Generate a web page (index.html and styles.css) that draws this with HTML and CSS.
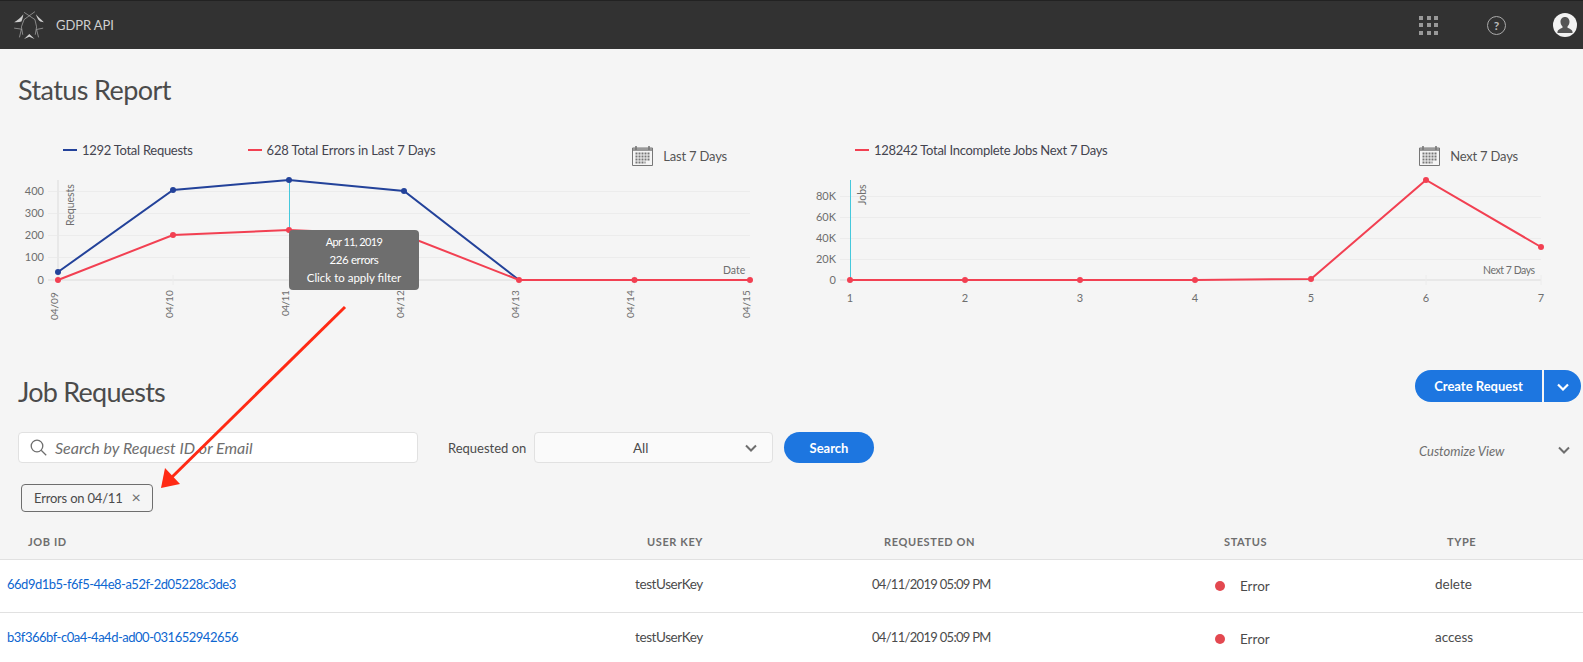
FILE: index.html
```html
<!DOCTYPE html>
<html lang="en">
<head>
  <meta charset="UTF-8">
  <meta name="viewport" content="width=device-width, initial-scale=1.0">
  <title>GDPR API</title>
  <link rel="stylesheet" href="styles.css">
</head>
<body>
  <svg class="defs" width="0" height="0" aria-hidden="true">
    <symbol id="calendar" viewBox="0 0 21 21">
      <path d="M.5 3h20v17.5H.5z" fill="none" stroke="#777"/>
      <path d="M1 3h19v3H1z" fill="#999"/>
      <path d="M4 1v4M17 1v4" stroke="#777" stroke-width="1.6"/>
      <path d="M3.5 8.5h14M3.5 11.500h14M3.500 14.500h14M3.500 17.500h10" stroke="#777" stroke-width="2" stroke-dasharray="2 1"/>
    </symbol>
  </svg>

  <header class="topbar">
    <svg class="logo" width="30" height="29" viewBox="42 40 90 88" fill="none" stroke="#b5b5b5" stroke-width="2">
      <path d="M72 44L105 66M105 42L72 66M72 66L64 88L68 112M105 66L110 88L106 112M42 92L64 95L58 120M130 92L110 96L116 120"/>
      <path d="M42 74C52 68 60 62 70 50C68 62 66 68 64 72C58 74 50 75 42 74zM132 74C122 74 114 70 108 50C112 56 122 64 132 74zM72 125L88 110L104 125L88 118z" fill="#cfcfcf" stroke="none"/>
    </svg>
    <span class="app-name">GDPR API</span>
    <div class="topbar-actions">
      <div class="apps-grid">
        <i></i><i></i><i></i><i></i><i></i><i></i><i></i><i></i><i></i>
      </div>
      <span class="help-icon">?</span>
      <svg class="avatar" width="24" height="24" viewBox="0 0 24 24">
        <circle cx="12" cy="12" r="12" fill="#f2f2f2"/>
        <path d="M12 4c-3 0-4.500 2.300-4.500 4.800 0 2 .9 3.600 2 4.700v1.300c-2.500 1-4.800 1.900-5.200 4.400 0 .5.300.8.700.8h14c.4 0 .7-.3.700-.8-.4-2.500-2.700-3.400-5.200-4.400v-1.300c1.100-1.100 2-2.700 2-4.700C16.500 6.300 15 4 12 4z" fill="#555"/>
      </svg>
    </div>
  </header>

  <main class="page">
    <h1 class="page-title">Status Report</h1>

    <section class="charts">
      <div class="chart-panel">
        <div class="chart-top">
          <div class="legend legend-left">
            <span class="legend-item"><i class="swatch swatch-blue"></i>1292 Total Requests</span>
            <span class="legend-item legend-errors"><i class="swatch swatch-red"></i>628 Total Errors in Last 7 Days</span>
          </div>
          <div class="range range-left">
            <svg width="21" height="21"><use href="#calendar"/></svg>
            <span>Last 7 Days</span>
          </div>
        </div>
        <svg class="chart" width="790" height="170" viewBox="0 170 790 170">
          <g class="grid">
            <path d="M48 191.500H750M48 213.500H750M48 235.500H750M48 257.500H750"/>
            <path class="axis" d="M48 280H750M58 180V280"/>
            <path d="M173 275V285M289 275V285M404 275V285M519 275V285M634.500 275V285M750 275V285"/>
          </g>
          <g class="y-labels">
            <text x="44" y="195">400</text>
            <text x="44" y="217">300</text>
            <text x="44" y="239">200</text>
            <text x="44" y="261">100</text>
            <text x="44" y="284">0</text>
          </g>
          <text class="axis-label" transform="translate(74 226) rotate(-90)">Requests</text>
          <text class="axis-label" x="723" y="274">Date</text>
          <g class="x-dates">
            <text transform="translate(58 320) rotate(-90)">04/09</text>
            <text transform="translate(173 318) rotate(-90)">04/10</text>
            <text class="date-tight" transform="translate(289 316) rotate(-90)">04/11</text>
            <text transform="translate(404 318) rotate(-90)">04/12</text>
            <text transform="translate(519 318) rotate(-90)">04/13</text>
            <text transform="translate(634 318) rotate(-90)">04/14</text>
            <text transform="translate(750 318) rotate(-90)">04/15</text>
          </g>
          <path class="cursor" d="M289.500 180V280"/>
          <polyline class="line-blue" points="58,272 173,190 289,180 404,191 519,280"/>
          <g class="dots-blue">
            <circle cx="58" cy="272" r="3"/><circle cx="173" cy="190" r="3"/><circle cx="289" cy="180" r="3"/><circle cx="404" cy="191" r="3"/>
          </g>
          <polyline class="line-red" points="58,280 173,235 289,230 404,235 519,280 750,280"/>
          <g class="dots-red">
            <circle cx="58" cy="280" r="3"/><circle cx="173" cy="235" r="3"/><circle cx="289" cy="230" r="3"/><circle cx="519" cy="280" r="3"/><circle cx="634.500" cy="280" r="3"/><circle cx="750" cy="280" r="3"/>
          </g>
        </svg>
        <div class="chart-tooltip">
          <span class="tip-date">Apr 11, 2019</span>
          <span class="tip-count">226 errors</span>
          <span>Click to apply filter</span>
        </div>
      </div>

      <div class="chart-panel">
        <div class="chart-top">
          <div class="legend legend-right">
            <span class="legend-item"><i class="swatch swatch-red"></i>128242 Total Incomplete Jobs Next 7 Days</span>
          </div>
          <div class="range range-right">
            <svg width="21" height="21"><use href="#calendar"/></svg>
            <span>Next 7 Days</span>
          </div>
        </div>
        <svg class="chart" width="793" height="170" viewBox="790 170 793 170">
          <g class="grid">
            <path d="M840 196.500H1541M840 217.500H1541M840 238.500H1541M840 259.500H1541"/>
            <path class="axis" d="M840 280H1541"/>
            <path d="M965 275V285M1080 275V285M1195 275V285M1311 275V285M1426 275V285M1541 275V285"/>
          </g>
          <g class="y-labels">
            <text x="836" y="200">80K</text>
            <text x="836" y="221">60K</text>
            <text x="836" y="242">40K</text>
            <text x="836" y="263">20K</text>
            <text x="836" y="284">0</text>
          </g>
          <text class="axis-label" transform="translate(866 205) rotate(-90)">Jobs</text>
          <text class="axis-label axis-label-tight" x="1483" y="274">Next 7 Days</text>
          <g class="x-steps">
            <text x="850" y="302">1</text><text x="965" y="302">2</text><text x="1080" y="302">3</text><text x="1195" y="302">4</text><text x="1311" y="302">5</text><text x="1426" y="302">6</text><text x="1541" y="302">7</text>
          </g>
          <path class="cursor" d="M850.500 180V280"/>
          <polyline class="line-red" points="850,280 965,280 1080,280 1195,280 1311,279 1426,180 1541,247"/>
          <g class="dots-red">
            <circle cx="850" cy="280" r="3"/><circle cx="965" cy="280" r="3"/><circle cx="1080" cy="280" r="3"/><circle cx="1195" cy="280" r="3"/><circle cx="1311" cy="279" r="3"/><circle cx="1426" cy="180" r="3"/><circle cx="1541" cy="247" r="3"/>
          </g>
        </svg>
      </div>
    </section>

    <section class="jobs">
      <div class="jobs-head">
        <h1 class="jobs-title">Job Requests</h1>
        <div class="split-button">
          <button class="split-main">Create Request</button>
          <button class="split-caret">
            <svg width="12" height="8" viewBox="0 0 12 8" fill="none" stroke="#fff" stroke-width="2.200"><path d="M1 1.500l5 5 5-5"/></svg>
          </button>
        </div>
      </div>

      <div class="filters">
        <div class="search-box">
          <svg width="17" height="17" viewBox="0 0 17 17" fill="none" stroke="#6e6e6e" stroke-width="1.300"><circle cx="7" cy="7" r="5.800"/><path d="M11.200 11.200l5 5"/></svg>
          <span class="placeholder">Search by Request ID or Email</span>
        </div>
        <span class="filter-label">Requested on</span>
        <div class="select-box">
          <span class="select-value">All</span>
          <svg width="12" height="8" viewBox="0 0 12 8" fill="none" stroke="#6e6e6e" stroke-width="2"><path d="M1 1.500l5 5 5-5"/></svg>
        </div>
        <button class="search-button">Search</button>
        <div class="customize">
          <span class="customize-label">Customize View</span>
          <svg width="12" height="8" viewBox="0 0 12 8" fill="none" stroke="#6e6e6e" stroke-width="2"><path d="M1 1.500l5 5 5-5"/></svg>
        </div>
      </div>

      <div class="chips">
        <span class="chip">Errors on 04/11<span class="chip-close">×</span></span>
      </div>

      <div class="table">
        <div class="row row-head">
          <span class="th th-id">Job ID</span>
          <span class="th">User Key</span>
          <span class="th">Requested On</span>
          <span class="th th-status">Status</span>
          <span class="th">Type</span>
        </div>
        <div class="row">
          <a class="cell job-link" href="#">66d9d1b5-f6f5-44e8-a52f-2d05228c3de3</a>
          <span class="cell user-key">testUserKey</span>
          <span class="cell date">04/11/2019 05:09 PM</span>
          <span class="status"><i class="status-dot"></i>Error</span>
          <span class="cell">delete</span>
        </div>
        <div class="row">
          <a class="cell job-link" href="#">b3f366bf-c0a4-4a4d-ad00-031652942656</a>
          <span class="cell user-key">testUserKey</span>
          <span class="cell date">04/11/2019 05:09 PM</span>
          <span class="status"><i class="status-dot"></i>Error</span>
          <span class="cell">access</span>
        </div>
      </div>
    </section>
  </main>

  <!-- annotation drawn over the page -->
  <svg class="annotation" width="1583" height="662" viewBox="0 0 1583 662">
    <path d="M345 307L168 481" stroke="#ff2a14" stroke-width="3" fill="none"/>
    <path d="M161 488L165 468L180 484z" fill="#ff2a14"/>
  </svg>
</body>
</html>
```

FILE: styles.css
```css
/* Base */
* {
  margin: 0;
  padding: 0;
  box-sizing: border-box;
}

html, body {
  height: 100%;
  overflow: hidden;
}

body {
  position: relative;
  font-family: 'Lato', sans-serif;
  font-size: 13px;
  color: #4b4b4b;
  background-color: #f5f5f5;
}

.defs {
  position: absolute;
}

/* Top bar */
.topbar {
  display: flex;
  align-items: center;
  height: 49px;
  padding-left: 14px;
  background-color: #323232;
  border-top: 1px solid #222;
}

.app-name {
  margin-left: 12px;
  font-size: 13px;
  letter-spacing: -.1px;
  color: #cfcfcf;
}

.topbar-actions {
  display: flex;
  align-items: center;
  margin-left: auto;
  padding-right: 6px;
}

.apps-grid {
  display: grid;
  grid-template-columns: repeat(3, 4px);
  gap: 3.500px;
}

.apps-grid i {
  width: 4px;
  height: 4px;
  background-color: #999;
}

.help-icon {
  width: 19px;
  height: 19px;
  margin-left: 49px;
  border: 1px solid #aaa;
  border-radius: 50%;
  font-size: 12px;
  font-weight: 700;
  line-height: 17px;
  text-align: center;
  color: #bbb;
}

.avatar {
  margin-left: 47px;
}

/* Headings */
.page-title, .jobs-title {
  font-size: 27px;
  font-weight: 400;
  line-height: 34px;
  letter-spacing: -.6px;
  color: #4b4b4b;
}

.page-title {
  margin: 24px 0 0 18px;
}

/* Charts */
.charts {
  display: flex;
  margin-top: 33px;
}

.chart-panel {
  position: relative;
}

.chart-panel:first-child {
  width: 790px;
}

.chart-panel:last-child {
  width: 793px;
}

.chart-top {
  display: flex;
  justify-content: space-between;
  align-items: flex-start;
  height: 30px;
}

.legend {
  display: flex;
  line-height: 20px;
  font-size: 13px;
  letter-spacing: -.28px;
  color: #44444f;
}

.legend-left {
  gap: 55px;
  padding-left: 63px;
}

.legend-right {
  padding-left: 65px;
}

.legend-item {
  display: flex;
  align-items: center;
  white-space: nowrap;
}

.legend-errors {
  letter-spacing: -.15px;
}

.swatch {
  width: 14px;
  height: 2px;
  margin-right: 5px;
}

.swatch-blue {
  background-color: #23429a;
}

.swatch-red {
  background-color: #f24052;
}

.range {
  display: flex;
  align-items: center;
  gap: 10px;
  height: 21px;
  margin-top: 5px;
  font-size: 13px;
  letter-spacing: -.2px;
  color: #555;
}

.range-left {
  margin-right: 63px;
}

.range-right {
  margin-right: 65px;
}

.chart {
  display: block;
}

.grid path {
  fill: none;
  stroke: #ececec;
  stroke-width: 1;
}

.grid path.axis {
  stroke: #e8e8e8;
  stroke-width: 2;
}

.y-labels text {
  font-size: 11px;
  text-anchor: end;
  fill: #6e6e6e;
}

.axis-label {
  font-size: 10.500px;
  fill: #6e6e6e;
}

.axis-label-tight {
  letter-spacing: -.45px;
}

.x-dates text {
  font-size: 10px;
  fill: #6e6e6e;
}

.x-dates .date-tight {
  letter-spacing: -.5px;
}

.x-steps text {
  font-size: 11px;
  text-anchor: middle;
  fill: #6e6e6e;
}

.cursor {
  stroke: #45c8dc;
  stroke-width: 1;
}

.line-blue, .line-red {
  fill: none;
  stroke-width: 2;
}

.line-blue {
  stroke: #23429a;
}

.line-red {
  stroke: #f24052;
}

.dots-blue circle {
  fill: #23429a;
}

.dots-red circle {
  fill: #f24052;
}

.chart-tooltip {
  position: absolute;
  left: 289px;
  top: 90px;
  display: flex;
  flex-direction: column;
  justify-content: center;
  width: 130px;
  height: 60px;
  border-radius: 4px;
  background-color: #6e6e6e;
  font-size: 11.500px;
  line-height: 18px;
  text-align: center;
  color: #fff;
}

.tip-date {
  font-size: 11px;
  letter-spacing: -.6px;
}

.tip-count {
  letter-spacing: -.4px;
}

/* Job requests */
.jobs-head {
  display: flex;
  justify-content: space-between;
  align-items: flex-start;
  padding: 30px 2px 0 18px;
}

.jobs-title {
  margin-top: 5px;
  letter-spacing: -.75px;
}

.split-button {
  display: flex;
  gap: 2px;
}

.split-button button, .search-button {
  border: none;
  background-color: #1d76e0;
  font-family: inherit;
  font-size: 13px;
  font-weight: 700;
  color: #fff;
}

.split-main {
  width: 127px;
  height: 32px;
  border-radius: 16px 0 0 16px;
}

.split-caret {
  width: 37px;
  height: 32px;
  border-radius: 0 16px 16px 0;
}

.filters {
  display: flex;
  align-items: center;
  height: 31px;
  margin-top: 23px;
  padding: 0 13px 0 18px;
}

.search-box {
  display: flex;
  align-items: center;
  gap: 8px;
  width: 400px;
  height: 31px;
  padding-left: 11px;
  border: 1px solid #e1e1e1;
  border-radius: 4px;
  background-color: #fff;
}

.placeholder {
  font-size: 16px;
  font-style: italic;
  color: #6e6e6e;
}

.filter-label {
  width: 78px;
  margin: 0 8px 0 30px;
  font-size: 13px;
  white-space: nowrap;
}

.select-box {
  display: flex;
  align-items: center;
  width: 239px;
  height: 31px;
  padding: 0 15px 0 98px;
  border: 1px solid #e1e1e1;
  border-radius: 4px;
  background-color: #fafafa;
  font-size: 13.500px;
}

.select-box svg {
  margin-left: auto;
}

.search-button {
  width: 90px;
  height: 31px;
  margin-left: 11px;
  border-radius: 16px;
}

.customize {
  display: flex;
  align-items: center;
  justify-content: space-between;
  width: 151px;
  margin-left: auto;
  padding-top: 5px;
  font-size: 13px;
  font-style: italic;
  color: #6e6e6e;
}

.customize-label {
  margin-top: 2px;
}

.chips {
  margin: 21px 0 0 21px;
  height: 28px;
}

.chip {
  display: inline-flex;
  align-items: center;
  height: 28px;
  width: 132px;
  padding-left: 12px;
  border: 1px solid #6e6e6e;
  border-radius: 4px;
  font-size: 13px;
  letter-spacing: -.2px;
  white-space: nowrap;
}

.chip-close {
  margin-left: 9px;
  margin-top: -3px;
  font-size: 16px;
  color: #6e6e6e;
}

/* Table */
.row {
  display: grid;
  grid-template-columns: 628px 237px 343px 220px 1fr;
  align-items: center;
  height: 53px;
  padding-left: 7px;
  background-color: #fff;
  border-bottom: 1px solid #e1e1e1;
  font-size: 13.500px;
}

.row-head {
  align-items: end;
  height: 48px;
  padding-bottom: 11px;
  background-color: transparent;
}

.th {
  padding-left: 12px;
  font-size: 11px;
  font-weight: 700;
  letter-spacing: .6px;
  text-transform: uppercase;
  color: #6e6e6e;
}

.th-id {
  padding-left: 21px;
}

.th-status {
  padding-left: 9px;
}

.cell {
  margin-bottom: 4px;
}

.job-link {
  font-size: 13px;
  letter-spacing: -.49px;
  color: #0d66d0;
  text-decoration: none;
}

.user-key {
  letter-spacing: -.4px;
}

.date {
  font-size: 13px;
  letter-spacing: -.7px;
}

.status {
  display: flex;
  align-items: center;
}

.status-dot {
  width: 10px;
  height: 10px;
  margin-right: 15px;
  border-radius: 50%;
  background-color: #e34850;
}

/* Red annotation arrow */
.annotation {
  position: absolute;
  left: 0;
  top: 0;
  pointer-events: none;
}
```
